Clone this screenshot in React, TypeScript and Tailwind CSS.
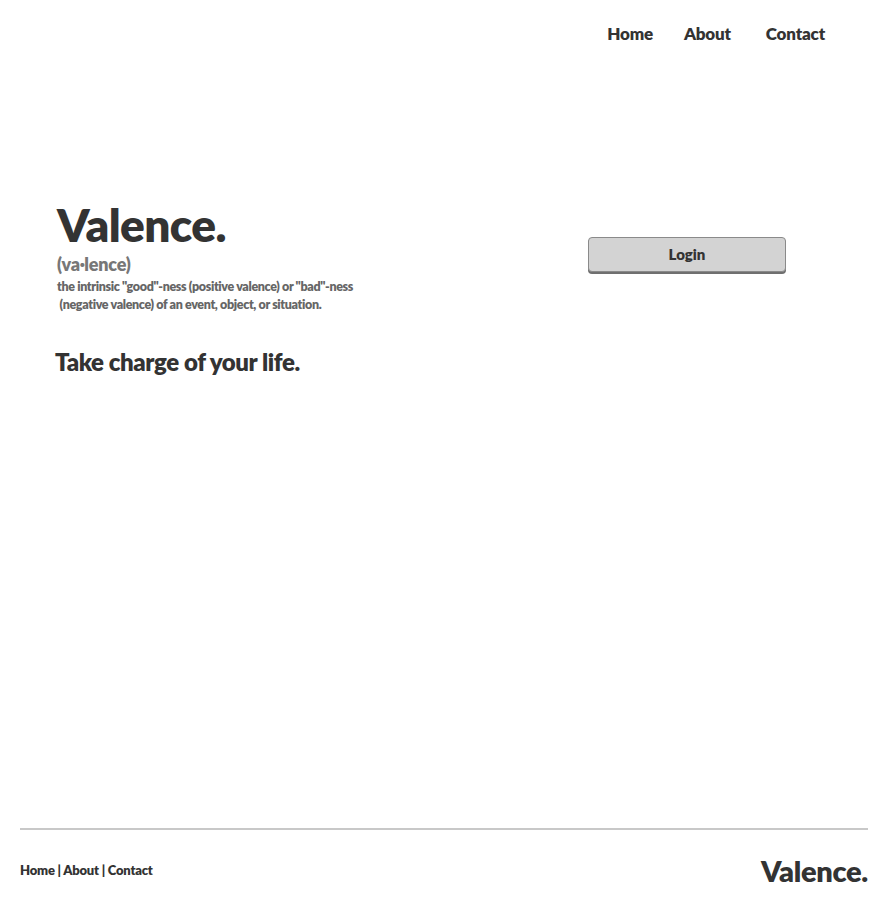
const App = () => {
  return (
    <div
      className="w-full min-h-[913px] bg-white flex flex-col text-[#333]"
      style={{ fontFamily: "Lato, 'Open Sans', sans-serif" }}
    >
      <header className="flex justify-end pt-[22px] pr-[63px] h-[60px]">
        <nav className="flex gap-[31px] text-[17px] font-extrabold leading-6 text-[#333] tracking-[-0.2px]">
          <a href="#">Home</a>
          <a href="#">About</a>
          <a href="#" className="ml-[4px]">Contact</a>
        </nav>
      </header>

      <main className="flex pt-[140px] px-[55px]">
        <div className="w-[533px]">
          <h1 className="text-[46px] font-extrabold leading-[50px] ml-[2px] tracking-[-0.6px]">Valence.</h1>
          <div className="text-[18px] font-extrabold text-[#777] leading-5 ml-[2px] mt-[4px] tracking-[-0.2px]">(va·lence)</div>
          <p className="text-[12.5px] font-extrabold text-[#666] leading-[18px] ml-[2px] mt-[4px] tracking-[-0.35px]">
            the intrinsic "good"-ness (positive valence) or "bad"-ness
            <br />
            &nbsp;(negative valence) of an event, object, or situation.
          </p>
          <h2 className="text-[24px] font-extrabold leading-7 mt-[34px] tracking-[-0.4px]">Take charge of your life.</h2>
        </div>
        <div className="pt-[37px]">
          <button className="w-[198px] h-[35px] bg-[#d3d3d3] border border-[#8a8a8a] rounded-[4px] shadow-[0_2px_0_#6f6f6f] text-[15px] font-extrabold text-[#333]">
            Login
          </button>
        </div>
      </main>

      <div className="flex-1" />

      <footer className="mx-[20px] border-t-2 border-[#c8c8c8] flex items-center justify-between h-[84px] mb-[1px]">
        <div className="text-[13px] font-extrabold text-[#333] tracking-[-0.2px]">Home | About | Contact</div>
        <div className="text-[29px] font-extrabold text-[#333] tracking-[-0.3px]">Valence.</div>
      </footer>
    </div>
  );
};

export default App;
